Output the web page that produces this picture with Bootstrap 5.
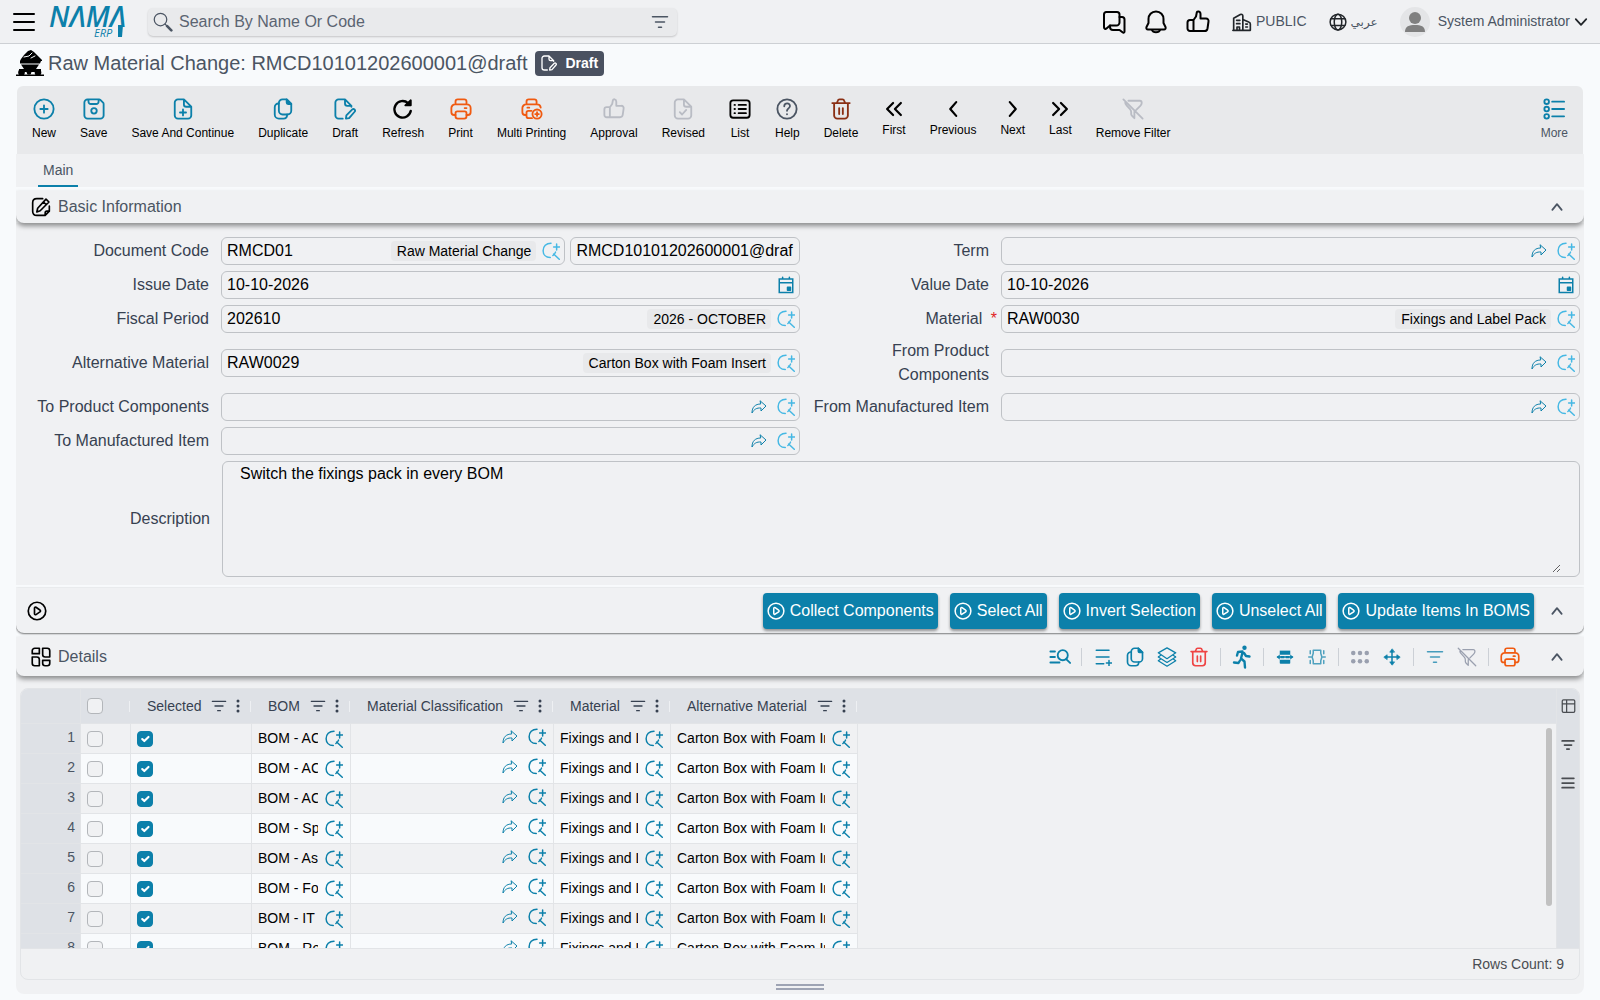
<!DOCTYPE html>
<html lang="en">
<head>
<meta charset="utf-8">
<meta name="viewport" content="width=device-width, initial-scale=1">
<title>Raw Material Change</title>
<link href="https://cdn.jsdelivr.net/npm/bootstrap@5.3.0/dist/css/bootstrap.min.css" rel="stylesheet">
<style>
:root{--brand:#0c80aa;--sky:#45b8e4;--panel:#f0f1f3;--page:#f8fafc;--line:#e2e4e7;--head:#dee1e6;--ink:#4b5563}
body{background:var(--page);font-family:"Liberation Sans",Arial,"DejaVu Sans",sans-serif;font-size:14px;color:#374151}
button{background:none;border:0;padding:0;color:inherit;display:inline-flex;align-items:center;justify-content:center}
a{color:inherit;text-decoration:none}
svg.ico{width:24px;height:24px;fill:none;stroke:currentColor;stroke-width:2;stroke-linecap:round;stroke-linejoin:round;flex:none;display:block}
svg.i14{width:14px;height:14px}
svg.i16{width:16px;height:16px}
svg.i18{width:18px;height:18px}
svg.i20{width:20px;height:20px}
svg.i22{width:22px;height:22px}
svg.thin{stroke-width:1.5}
svg.bold{stroke-width:3}
.brand{color:var(--brand)}.sky{color:var(--sky)}.muted{color:#b9bcc4}.orange{color:#f05a10}.ink{color:var(--ink)}

.topbar{height:44px;background:var(--panel);border-bottom:1px solid #cdd0d4;padding:0 12px}
.searchbox{width:529px;height:28px;background:#e9eaec;border-radius:5px;box-shadow:0 1px 2px rgba(0,0,0,.18);padding:0 8px 0 5px}
.searchbox input{background:none;border:0;outline:0;font-size:16px;color:var(--ink);flex:1}
.searchbox input::placeholder{color:#5b6472;opacity:1}
.topicons{gap:18px}
.arabic{font-size:12px}
.avatar{width:30px;height:30px;border-radius:50%;background:#e4e5e7}
.titlebar{height:42px;padding-bottom:4px}
.doctitle{font-size:20px;line-height:26px;color:var(--ink);font-weight:400;margin:0}
.draft-tag{height:25px;background:#4a5160;color:#fff;border-radius:4px;font-weight:700;padding:0 6px;gap:8px}

.tools{background:#e8e9eb;height:68px;border-radius:6px 6px 0 0;padding:12px 15px 0;margin:0 1px}
.tools button{flex-direction:column;font-size:12px;line-height:16px;color:#000;gap:5px;min-width:22px;justify-content:flex-start}
.tools .step{gap:2px}
.tools .step svg{stroke-width:2.400}
.tabs{background:var(--panel);height:33px;padding-left:22px}
.tabs a{font-size:14px;line-height:32px;padding:0 5px;height:33px;border-bottom:2px solid var(--brand);color:var(--ink)}
.secthead{background:var(--panel);border-radius:0 0 8px 8px;padding:0 20px 0 15px;font-size:16px;color:var(--ink);position:relative;clip-path:inset(-3px 0 -12px 0)}
.secthead .caption-text{margin-left:7px}
.deep{box-shadow:0 3px 5px rgba(0,0,0,.42)}
.slim{box-shadow:0 0 2px rgba(0,0,0,.12),0 1px 2px rgba(0,0,0,.5)}

.formgrid{background:var(--panel);padding:14px 4px 8px;display:grid;grid-template-columns:1fr 1fr;row-gap:6px}
.fieldrow{display:grid;grid-template-columns:201px 1fr;align-items:center;min-height:28px}
.fieldrow.wide{grid-column:1/-1;grid-template-columns:202px 1fr}
.fieldrow>label{font-size:16px;line-height:24px;text-align:right;padding-right:12px}
.fieldrow .req{padding-right:4px}
.req span{color:#e02424;margin-left:4px}
.box{height:28px;border:1px solid #bfc2c6;border-radius:6px;display:flex;align-items:center;padding:0 4px 0 5px;min-width:0}
.box input{border:0;background:none;outline:0;padding:0;font-size:16px;color:#000;min-width:0;flex:1}
.box button+button{margin-left:10px}
.hint{background:#e8e9eb;border-radius:4px;font-size:14px;line-height:20px;padding:0 5px 0 6px;margin-right:6px;color:#000}
.split{display:grid;grid-template-columns:3fr 2fr;gap:5px;min-width:0}
.notes{height:116px;border:1px solid #bfc2c6;border-radius:6px;padding:0 18px 3px 17px}
.notes textarea{border:0;background:none;outline:0;width:100%;height:100%;padding:0;font-size:16px;line-height:24px;color:#000;display:block}

.runbtn{background:var(--brand)!important;color:#fff!important;border-radius:4px;height:36px;font-size:16px;padding:0 4px!important;gap:5px;box-shadow:0 2px 3px rgba(0,0,0,.4)}
.gtools{gap:8px}
.gtools button{width:24px;height:24px}
.gtools i{width:1px;height:18px;background:#ccd0d6;margin:0 1px}

.gridwrap{background:var(--panel);padding:12px 4px 0;border-radius:0 0 8px 8px}
.gridbox{border:1px solid var(--line);border-radius:8px;overflow:hidden;height:292px}
.gridview{position:relative;overflow:hidden;flex:1;min-width:0}
.grid{table-layout:fixed;width:100%;border-collapse:separate;border-spacing:0}
.grid th{background:var(--head);height:35px;font-weight:400;padding:0 11px 0 16px;border-bottom:1px solid var(--line);color:#374151;position:relative}
.grid th.sep::after{content:"";position:absolute;right:1px;top:12px;width:1px;height:11px;background:#eef0f3}
.grid td{height:30px;padding:0 7px 0 6px;border-bottom:1px solid var(--line);border-right:1px solid var(--line);color:#000}
.grid tr:nth-child(even) td{background:var(--page)}
.grid tbody td.fill{border:0;background:var(--panel)}
.grid tbody th{height:30px;text-align:right;padding:0 5px 3px 0;color:var(--ink);border-right:1px solid var(--line)}
.grid .form-check-input{width:16px;height:16px;margin:0;display:block;border:1px solid #b3b6ba;border-radius:4px;background-color:var(--panel);box-shadow:none}
.grid .form-check-input:checked{background-color:var(--brand);border-color:var(--brand);background-size:14px}
.cut{overflow:hidden;white-space:nowrap;flex:1;margin-right:7px}
.thumb{position:absolute;right:4px;top:39px;width:6px;height:178px;border-radius:3px;background:#c1c1c1}
.side{width:23px;background:var(--head);border-left:1px solid var(--line);gap:22px;padding-top:8px;color:#4a4d52}
.gridfoot{height:31px;flex:none;border-top:1px solid var(--line);padding-right:15px;color:#4a4d52}
.grip{width:48px;height:6px;border:solid #9ea4b4;border-width:2px 0;margin:0 auto}
</style>
</head>
<body>
<svg class="d-none" xmlns="http://www.w3.org/2000/svg">
<symbol id="menu" viewBox="0 0 24 24"><path d="M2 4h20M2 12h20M2 20h20"/></symbol>
<symbol id="glass" viewBox="0 0 24 24"><circle cx="9" cy="9" r="7.500"/><path d="M14.500 14.500l2 2"/><path d="M17 17l5 5" stroke-width="3.200"/></symbol>
<symbol id="funnel" viewBox="0 0 24 24"><path d="M2 5h20M6 12h12M10 19h4"/></symbol>
<symbol id="chat" viewBox="0 0 24 24"><path d="M4 2h11a2.500 2.500 0 0 1 2.500 2.500v8a3 3 0 0 1-3 3H8L4.500 18.500c-1 .8-2.500.2-2.500-1.200V4.500A2.500 2.500 0 0 1 4 2z"/><path d="M17.500 7H20a2.500 2.500 0 0 1 2.500 2.500v12c0 1-1 1.500-2 .8L17.500 20H11a3 3 0 0 1-3-3v-1.500"/></symbol>
<symbol id="bell" viewBox="0 0 24 24"><path d="M12 1.500c-4.600 0-7.500 3.500-7.500 7.500v4l-2 4c-.6 1.300.2 2.500 1.500 2.500h16c1.300 0 2.100-1.200 1.500-2.500l-2-4V9c0-4-2.900-7.500-7.500-7.500z"/><path d="M8 20c1 3 7 3 8 0"/></symbol>
<symbol id="like" viewBox="0 0 24 24"><path d="M7.500 10H4a2.500 2.500 0 0 0-2.500 2.500v6A2.500 2.500 0 0 0 4 21h14.500a3 3 0 0 0 3-2.500l1-7A2.500 2.500 0 0 0 20 8.500h-5.500V4c0-3-3.500-3.500-3.800-1L10 6.500 7.500 10v11"/></symbol>
<symbol id="office" viewBox="0 0 24 24"><path d="M2 22V7.500L10 3a2 2 0 0 1 3 1.500V22M13 9l7 3a2.500 2.500 0 0 1 2 2.500V22H1M6 22v-4h3v4M5.500 10h4M5.500 14h4M16.500 14.500h2M16.500 18h2"/></symbol>
<symbol id="globe" viewBox="0 0 24 24"><circle cx="12" cy="12" r="10.500"/><ellipse cx="12" cy="12" rx="5" ry="10.500"/><path d="M3 7.500h18M3 16.500h18"/></symbol>
<symbol id="down" viewBox="0 0 24 24"><path d="M3 7l9 10 9-10"/></symbol>
<symbol id="up" viewBox="0 0 24 24"><path d="M4 17l8-10 8 10"/></symbol>
<symbol id="cart" viewBox="0 0 28 26"><g fill="#000" stroke="none"><path d="M5 9l3-4 4-4 3-1 3 2 3 3 3 3 2 2v1H4z"/><path d="M4 11h21l-1 2.500H4zM5 14.500h18l-3 4.500H8z"/><path d="M3 19h22v3H3zM0 24.500h28V26H0z"/><circle cx="5.500" cy="22.500" r="3.300"/><circle cx="13" cy="22.500" r="2.300"/><circle cx="22" cy="22.500" r="3.300"/></g><path d="M8 7l5-1 3-3M15 8l4-2" stroke="#f8fafc" stroke-width="1"/></symbol>
<symbol id="plusring" viewBox="0 0 24 24"><circle cx="12" cy="12" r="10.500"/><path d="M12 8v8M8 12h8"/></symbol>
<symbol id="save" viewBox="0 0 24 24"><path d="M5 1.500h12.500a2 2 0 0 1 1.400.6l3 3a2 2 0 0 1 .6 1.400V19a3.500 3.500 0 0 1-3.500 3.500H5A3.500 3.500 0 0 1 1.500 19V5A3.500 3.500 0 0 1 5 1.500zM6 1.500V4a2.500 2.500 0 0 0 2.500 2.500h6A2.500 2.500 0 0 0 17 4V1.500"/><circle cx="12" cy="14" r="3"/></symbol>
<symbol id="docplus" viewBox="0 0 24 24"><path d="M13 1.500H6.500A3.500 3.500 0 0 0 3 5v14a3.500 3.500 0 0 0 3.500 3.500h11A3.500 3.500 0 0 0 21 19V9.500zM13 1.500V7a2.500 2.500 0 0 0 2.500 2.500H21M12 12.500v6.500M8.700 15.800h6.600"/></symbol>
<symbol id="copy" viewBox="0 0 24 24"><path d="M16 1.500h-4.500a4 4 0 0 0-4 4v8.500a4 4 0 0 0 4 4h5.500a4 4 0 0 0 4-4V6.500z"/><path d="M16 1.500V5a1.500 1.500 0 0 0 1.500 1.500h3.500z" fill="currentColor"/><path d="M7.500 6A4 4 0 0 0 3 10v8a4.500 4.500 0 0 0 4.500 4.500h5c2.300 0 4-1.500 4-4.500"/></symbol>
<symbol id="docpen" viewBox="0 0 24 24"><path d="M9.500 22.500H5A3.500 3.500 0 0 1 1.500 19V5A3.500 3.500 0 0 1 5 1.500h7l7 7v1M12 1.500V6a2.500 2.500 0 0 0 2.500 2.500H19"/><path d="M13 22.500l.5-3.500 6.500-6.500c1.500-1.500 4 .8 2.500 2.500L16.500 22z"/></symbol>
<symbol id="refresh" viewBox="0 0 24 24"><path d="M20.500 14a9 9 0 1 1-3-8.500" stroke-width="2.600"/><path d="M20.500 2.500v5.500h-6z" fill="currentColor"/></symbol>
<symbol id="printer" viewBox="0 0 24 24"><path d="M6 7V4a2.500 2.500 0 0 1 2.500-2.500h7A2.500 2.500 0 0 1 18 4v3M6 18.500H4.500A3 3 0 0 1 1.500 15.500V11a4 4 0 0 1 4-4h13a4 4 0 0 1 4 4v4.500a3 3 0 0 1-3 3H18M16 11h2"/><path d="M8 14.500h8a2 2 0 0 1 2 2V20a2.500 2.500 0 0 1-2.500 2.500h-7A2.500 2.500 0 0 1 6 20v-3.500a2 2 0 0 1 2-2z"/></symbol>
<symbol id="multi" viewBox="0 0 24 24"><path d="M6 7V4a2.500 2.500 0 0 1 2.500-2.500h6A2.500 2.500 0 0 1 17 4v3M6 18.500H4.500A3 3 0 0 1 1.500 15.500V11a4 4 0 0 1 4-4h12a4 4 0 0 1 4 3.500M12 22H8.500A2.500 2.500 0 0 1 6 19.500V16a2 2 0 0 1 2-2h3.500M7 10.500h2"/><circle cx="17.500" cy="17.500" r="5"/><path d="M17.500 15.500v4M15.500 17.500h4"/></symbol>
<symbol id="doccheck" viewBox="0 0 24 24"><path d="M13 1.500H6.500A3.500 3.500 0 0 0 3 5v14a3.500 3.500 0 0 0 3.500 3.500h11A3.500 3.500 0 0 0 21 19V9.500zM13 1.500V7a2.500 2.500 0 0 0 2.500 2.500H21M8.500 15.500l2.500 2.500 4.500-5"/></symbol>
<symbol id="list" viewBox="0 0 24 24"><rect x="1.500" y="2.500" width="21" height="19" rx="3"/><path d="M6 7.500h.5M6 12h.5M6 16.500h.5M10.500 7.500h8M10.500 12h8M10.500 16.500h8"/></symbol>
<symbol id="help" viewBox="0 0 24 24"><circle cx="12" cy="12" r="10.500"/><path d="M9 9c0-4.500 6.500-4 6.200 0-.2 2.200-3.200 2.500-3.200 5M12 17.500v.3"/></symbol>
<symbol id="trash" viewBox="0 0 24 24"><path d="M2.500 5.500h19M7.500 5.500l1-2.500a2 2 0 0 1 2-1.500h3a2 2 0 0 1 2 1.500l1 2.500M4.500 5.500V19A3.500 3.500 0 0 0 8 22.500h8a3.500 3.500 0 0 0 3.500-3.500V5.500M10 11v6.500M14 11v6.500"/></symbol>
<symbol id="first" viewBox="0 0 24 24"><path d="M11 5.500L4.500 12l6.500 6.500M19.500 5.500L13 12l6.500 6.500"/></symbol>
<symbol id="prev" viewBox="0 0 24 24"><path d="M15.500 4.500L9 12l6.500 7.500"/></symbol>
<symbol id="next" viewBox="0 0 24 24"><path d="M8.500 4.500L15 12l-6.500 7.500"/></symbol>
<symbol id="last" viewBox="0 0 24 24"><path d="M4.500 5.500L11 12l-6.500 6.500M13 5.500l6.500 6.500-6.500 6.500"/></symbol>
<symbol id="nofilter" viewBox="0 0 24 24"><path d="M1.500 1.500l21 21M7 3h12.500c1.500 0 2 1 2 2.500s-.5 2-1.500 3L15.500 13M3.500 5c0 1.500.5 2 1.500 3l4 4.500c.8 1 1 1.500 1 3v2c0 1 .5 1.500 1 2l2.500 2.500V15"/></symbol>
<symbol id="more" viewBox="0 0 24 24"><circle cx="4" cy="4" r="2.500"/><circle cx="4" cy="12" r="2.500"/><circle cx="4" cy="20" r="2.500"/><path d="M10 4h13M10 12h13M10 20h13"/></symbol>
<symbol id="edit" viewBox="0 0 24 24"><path d="M14 2H7C3.500 2 2 3.500 2 7v10c0 3.500 1.500 5 5 5h10l5-5v-6M17 22v-3c0-1.500.5-2 2-2h3M18 2.500l3.500 3.500L11 16.500 7 18l1-4.500zM15 6l3 3"/></symbol>
<symbol id="lookup" viewBox="0 0 24 24"><path d="M12 1.500C5.500 1.500 1.500 6 1.500 11.500c0 5 3.500 9 9.500 9M19.500 2.500v8M15.500 6.500h8M18 13.500c-.5 1.500-2 3.500-3.500 4.500M15.500 16l7.500 7"/></symbol>
<symbol id="share" viewBox="0 0 24 24"><path d="M14 3l8.500 7.500L15 18v-4.500C8.500 13 4.500 15.500 1.500 21 1.500 12 6.500 7.500 14 7.500z"/></symbol>
<symbol id="cal" viewBox="0 0 24 24"><path d="M3 4h18v18H3zM3 9h18M7.500 1.500V4M16.500 1.500V4" stroke-linejoin="miter"/><path d="M14 15h4v4h-4z" fill="currentColor"/></symbol>
<symbol id="play" viewBox="0 0 24 24"><circle cx="12" cy="12" r="10.500"/><path d="M9 8.500c0-1 1-1.500 1.800-1l4.700 3.300c.9.600.9 1.700 0 2.300l-4.700 3.200C10 16.800 9 16.300 9 15.300z"/></symbol>
<symbol id="tiles" viewBox="0 0 24 24"><path d="M4.500 1.500H10V8H1.500V4.500a3 3 0 0 1 3-3zM14 1.500h5.500a3 3 0 0 1 3 3V12H17a3 3 0 0 1-3-3zM1.500 12H7a3 3 0 0 1 3 3v7.500H4.500a3 3 0 0 1-3-3zM14 16h8.500v3.500a3 3 0 0 1-3 3H17a3 3 0 0 1-3-3z"/></symbol>
<symbol id="listfind" viewBox="0 0 24 24"><circle cx="15" cy="10" r="5.500"/><path d="M19 14.500l4 4M1.500 6h5M1.500 12h5M1.500 18h10"/></symbol>
<symbol id="addrow" viewBox="0 0 24 24"><path d="M3 3h17M3 12h17M3 21h10M16.500 20h7M20 16.500v7"/></symbol>
<symbol id="layers" viewBox="0 0 24 24"><path d="M12 1l10.500 6L12 14 1.500 7zM1.500 12L12 18.500 22.500 12M1.500 16.500L12 23l10.500-6.500M1.500 12l3-2M22.500 12l-3-2M1.500 16.500l3-2M22.500 16.500l-3-2"/></symbol>
<symbol id="runner" viewBox="0 0 24 24"><circle cx="14.500" cy="2.700" r="2.200" fill="currentColor" stroke="none"/><path d="M7 10.500l1-3.500 4.500-.5M12.500 7.500l-1.500 6 3.500 3 .5 6M10 15.500L8.500 18 4 17.500M14 8l2 3 3.500.5" stroke-width="2.400"/></symbol>
<symbol id="fitrow" viewBox="0 0 24 24"><g fill="currentColor" stroke="none"><rect x="5" y="3.500" width="14" height="5.500"/><rect x="5" y="15.500" width="14" height="5.500" rx="1"/><path d="M6 10.500h5v3H6zM13 10.500h5v3h-5zM1 12l4-3.500v7zM23 12l-4-3.500v7z"/></g><path d="M2 12h20"/></symbol>
<symbol id="fitcol" viewBox="0 0 24 24"><path d="M7 3h10v4l1.500 5L17 17v4H7v-4l-1.500-5L7 7zM3 3.500v4M1 12h3M3 16.500v4M21 3.500v4M20 12h3M21 16.500v4"/></symbol>
<symbol id="dots" viewBox="0 0 24 24"><g fill="currentColor" stroke="none"><circle cx="3" cy="6.500" r="3"/><circle cx="12" cy="6.500" r="3"/><circle cx="21" cy="6.500" r="3"/><circle cx="3" cy="17.500" r="3"/><circle cx="12" cy="17.500" r="3"/><circle cx="21" cy="17.500" r="3"/></g></symbol>
<symbol id="move" viewBox="0 0 24 24"><path d="M12 3v18M3 12h18"/><path d="M12 1.500L9 5.500h6zM12 22.500l-3-4h6zM1.500 12l4-3v6zM22.500 12l-4-3v6z" fill="currentColor" stroke-width="1"/></symbol>
<symbol id="kebab" viewBox="0 0 6 16"><g fill="currentColor" stroke="none"><circle cx="3" cy="3" r="1.500"/><circle cx="3" cy="8" r="1.500"/><circle cx="3" cy="13" r="1.500"/></g></symbol>
<symbol id="columns" viewBox="0 0 24 24"><path d="M4 2h16a2 2 0 0 1 2 2v16a2 2 0 0 1-2 2H4a2 2 0 0 1-2-2V4a2 2 0 0 1 2-2zM9 2v20M2 8.500h20" stroke-linecap="butt"/></symbol>
</svg>

<header class="topbar d-flex align-items-center">
  <button aria-label="Menu" class="text-black"><svg class="ico"><use href="#menu"/></svg></button>
  <a href="#" class="ms-2 me-2" aria-label="NAMA ERP">
    <svg width="96" height="34" viewBox="0 0 96 34" class="d-block"><g fill="#0c80aa" font-family="'Open Sans'" font-style="italic"><text x="5" y="22" font-size="28" font-weight="600">NΛMΛ</text><text x="50" y="32" font-size="11">ERP</text></g><path d="M74 20h5l-1 12h-4z" fill="#0c80aa"/></svg>
  </a>
  <div class="searchbox d-flex align-items-center">
    <svg class="ico i20 thin ink"><use href="#glass"/></svg>
    <input class="ms-1" type="text" aria-label="Search" placeholder="Search By Name Or Code">
    <button aria-label="Filter search" class="ink"><svg class="ico i18"><use href="#funnel"/></svg></button>
  </div>
  <div class="ms-auto d-flex align-items-center topicons">
    <button aria-label="Messages" class="text-black"><svg class="ico"><use href="#chat"/></svg></button>
    <button aria-label="Notifications" class="text-black"><svg class="ico"><use href="#bell"/></svg></button>
    <button aria-label="Approvals" class="text-black"><svg class="ico"><use href="#like"/></svg></button>
    <button class="ink ms-1"><svg class="ico i20 me-1 text-dark"><use href="#office"/></svg><span>PUBLIC</span></button>
    <button class="ink ms-1 me-1"><svg class="ico i18 me-1 text-dark"><use href="#globe"/></svg><span lang="ar" class="arabic">عربي</span></button>
    <button class="ink"><span class="avatar me-2"><svg width="30" height="30" viewBox="0 0 30 30" class="d-block"><g fill="#808080"><circle cx="15" cy="11" r="6"/><path d="M5 25c0-6 4-7 10-7s10 1 10 7z"/></g></svg></span><span>System Administrator</span><svg class="ico i14 bold ms-1 text-dark"><use href="#down"/></svg></button>
  </div>
</header>

<main class="px-3">
  <div class="titlebar d-flex align-items-center">
    <svg class="ico" style="width:28px;height:26px"><use href="#cart"/></svg>
    <h1 class="doctitle ms-1">Raw Material Change: RMCD10101202600001@draft</h1>
    <span class="draft-tag d-inline-flex align-items-center ms-2"><svg class="ico i16"><use href="#docpen"/></svg>Draft</span>
  </div>

  <nav class="tools d-flex align-items-start" aria-label="Document tools">
    <div class="d-flex gap-4 align-items-start">
      <button><svg class="ico i22 brand"><use href="#plusring"/></svg>New</button>
      <button><svg class="ico i22 brand"><use href="#save"/></svg>Save</button>
      <button><svg class="ico i22 brand"><use href="#docplus"/></svg>Save And Continue</button>
      <button><svg class="ico i22 brand"><use href="#copy"/></svg>Duplicate</button>
      <button><svg class="ico i22 brand"><use href="#docpen"/></svg>Draft</button>
      <button><svg class="ico i22"><use href="#refresh"/></svg>Refresh</button>
      <button><svg class="ico i22 orange"><use href="#printer"/></svg>Print</button>
      <button><svg class="ico i22 orange"><use href="#multi"/></svg>Multi Printing</button>
      <button><svg class="ico i22 muted"><use href="#like"/></svg>Approval</button>
      <button><svg class="ico i22 muted"><use href="#doccheck"/></svg>Revised</button>
      <button><svg class="ico i22"><use href="#list"/></svg>List</button>
      <button><svg class="ico i22 ink"><use href="#help"/></svg>Help</button>
      <button><svg class="ico i22" style="color:#8a2f14"><use href="#trash"/></svg>Delete</button>
      <button class="step"><svg class="ico i22"><use href="#first"/></svg>First</button>
      <button class="step"><svg class="ico i22"><use href="#prev"/></svg>Previous</button>
      <button class="step"><svg class="ico i22"><use href="#next"/></svg>Next</button>
      <button class="step"><svg class="ico i22"><use href="#last"/></svg>Last</button>
      <button><svg class="ico i22 muted"><use href="#nofilter"/></svg>Remove Filter</button>
    </div>
    <button class="ms-auto"><svg class="ico i22 brand"><use href="#more"/></svg><span class="ink">More</span></button>
  </nav>
  <div class="tabs d-flex mb-1"><a href="#basic">Main</a></div>

  <section id="basic">
    <div class="secthead deep d-flex align-items-center" style="height:32px">
      <svg class="ico i20 text-black"><use href="#edit"/></svg><span class="caption-text">Basic Information</span>
      <button class="ms-auto ink" aria-label="Collapse basic information"><svg class="ico i14 bold"><use href="#up"/></svg></button>
    </div>
    <form class="formgrid" onsubmit="return false">
      <div class="fieldrow"><label for="f1">Document Code</label>
        <div class="split">
          <div class="box"><input id="f1" value="RMCD01"><span class="hint">Raw Material Change</span><button aria-label="Look up" class="sky"><svg class="ico i18"><use href="#lookup"/></svg></button></div>
          <div class="box"><input aria-label="Document number" value="RMCD10101202600001@draf"></div>
        </div></div>
      <div class="fieldrow"><label for="f2">Term</label>
        <div class="box"><input id="f2"><button aria-label="Open" class="brand"><svg class="ico i16 thin"><use href="#share"/></svg></button><button aria-label="Look up" class="sky"><svg class="ico i18"><use href="#lookup"/></svg></button></div></div>
      <div class="fieldrow"><label for="f3">Issue Date</label>
        <div class="box"><input id="f3" value="10-10-2026"><button aria-label="Pick date" class="brand"><svg class="ico i18"><use href="#cal"/></svg></button></div></div>
      <div class="fieldrow"><label for="f4">Value Date</label>
        <div class="box"><input id="f4" value="10-10-2026"><button aria-label="Pick date" class="brand"><svg class="ico i18"><use href="#cal"/></svg></button></div></div>
      <div class="fieldrow"><label for="f5">Fiscal Period</label>
        <div class="box"><input id="f5" value="202610"><span class="hint">2026 - OCTOBER</span><button aria-label="Look up" class="sky"><svg class="ico i18"><use href="#lookup"/></svg></button></div></div>
      <div class="fieldrow"><label for="f6" class="req">Material <span>*</span></label>
        <div class="box"><input id="f6" value="RAW0030"><span class="hint">Fixings and Label Pack</span><button aria-label="Look up" class="sky"><svg class="ico i18"><use href="#lookup"/></svg></button></div></div>
      <div class="fieldrow"><label for="f7">Alternative Material</label>
        <div class="box"><input id="f7" value="RAW0029"><span class="hint">Carton Box with Foam Insert</span><button aria-label="Look up" class="sky"><svg class="ico i18"><use href="#lookup"/></svg></button></div></div>
      <div class="fieldrow"><label for="f8">From Product Components</label>
        <div class="box"><input id="f8"><button aria-label="Open" class="brand"><svg class="ico i16 thin"><use href="#share"/></svg></button><button aria-label="Look up" class="sky"><svg class="ico i18"><use href="#lookup"/></svg></button></div></div>
      <div class="fieldrow"><label for="f9">To Product Components</label>
        <div class="box"><input id="f9"><button aria-label="Open" class="brand"><svg class="ico i16 thin"><use href="#share"/></svg></button><button aria-label="Look up" class="sky"><svg class="ico i18"><use href="#lookup"/></svg></button></div></div>
      <div class="fieldrow"><label for="f10">From Manufactured Item</label>
        <div class="box"><input id="f10"><button aria-label="Open" class="brand"><svg class="ico i16 thin"><use href="#share"/></svg></button><button aria-label="Look up" class="sky"><svg class="ico i18"><use href="#lookup"/></svg></button></div></div>
      <div class="fieldrow"><label for="f11">To Manufactured Item</label>
        <div class="box"><input id="f11"><button aria-label="Open" class="brand"><svg class="ico i16 thin"><use href="#share"/></svg></button><button aria-label="Look up" class="sky"><svg class="ico i18"><use href="#lookup"/></svg></button></div></div>
      <div class="fieldrow wide"><label for="f12">Description</label>
        <div class="notes"><textarea id="f12">Switch the fixings pack in every BOM</textarea></div></div>
    </form>
  </section>

  <section class="secthead slim d-flex align-items-center" style="height:45px;margin-top:3px">
    <svg class="ico i20 text-black" style="margin-left:-4px"><use href="#play"/></svg>
    <div class="ms-auto d-flex" style="gap:12px">
      <button class="runbtn"><svg class="ico i18"><use href="#play"/></svg>Collect Components</button>
      <button class="runbtn"><svg class="ico i18"><use href="#play"/></svg>Select All</button>
      <button class="runbtn"><svg class="ico i18"><use href="#play"/></svg>Invert Selection</button>
      <button class="runbtn"><svg class="ico i18"><use href="#play"/></svg>Unselect All</button>
      <button class="runbtn"><svg class="ico i18"><use href="#play"/></svg>Update Items In BOMS</button>
    </div>
    <button class="ink ms-3" aria-label="Collapse actions"><svg class="ico i14 bold"><use href="#up"/></svg></button>
  </section>

  <section>
    <div class="secthead deep d-flex align-items-center" style="height:39px;margin-top:4px">
      <svg class="ico i20 text-black"><use href="#tiles"/></svg><span class="caption-text">Details</span>
      <div class="gtools ms-auto d-flex align-items-center brand">
        <button aria-label="Find"><svg class="ico i22"><use href="#listfind"/></svg></button><i></i>
        <button aria-label="Add row"><svg class="ico i18"><use href="#addrow"/></svg></button>
        <button aria-label="Copy row"><svg class="ico i20"><use href="#copy"/></svg></button>
        <button aria-label="Layers"><svg class="ico i20 thin"><use href="#layers"/></svg></button>
        <button aria-label="Delete row" style="color:#ef4444"><svg class="ico i20"><use href="#trash"/></svg></button><i></i>
        <button aria-label="Run"><svg class="ico"><use href="#runner"/></svg></button><i></i>
        <button aria-label="Fit rows"><svg class="ico i18"><use href="#fitrow"/></svg></button>
        <button aria-label="Fit columns" style="opacity:.7"><svg class="ico i18"><use href="#fitcol"/></svg></button><i></i>
        <button aria-label="Arrange" style="color:#9aa0af"><svg class="ico i18"><use href="#dots"/></svg></button>
        <button aria-label="Move"><svg class="ico i18"><use href="#move"/></svg></button><i></i>
        <button aria-label="Filter" style="opacity:.75"><svg class="ico i18"><use href="#funnel"/></svg></button>
        <button aria-label="Remove filter" style="color:#9aa0af"><svg class="ico i20 thin"><use href="#nofilter"/></svg></button><i></i>
        <button aria-label="Print" class="orange"><svg class="ico i20"><use href="#printer"/></svg></button>
      </div>
      <button class="ink" style="margin-left:28px" aria-label="Collapse details"><svg class="ico i14 bold"><use href="#up"/></svg></button>
    </div>
    <div class="gridwrap">
      <div class="gridbox d-flex flex-column">
        <div class="d-flex flex-fill overflow-hidden">
          <div class="gridview">
            <table class="grid">
              <colgroup><col style="width:60px"><col style="width:50px"><col style="width:121px"><col style="width:99px"><col style="width:203px"><col style="width:117px"><col style="width:187px"><col></colgroup>
              <thead><tr id="heads"></tr></thead>
              <tbody id="rows"></tbody>
            </table>
            <div class="thumb"></div>
          </div>
          <div class="side d-flex flex-column align-items-center">
            <button aria-label="Columns"><svg class="ico i18" style="width:15px"><use href="#columns"/></svg></button>
            <button aria-label="Filters"><svg class="ico i16 bold" style="width:14px"><use href="#funnel"/></svg></button>
            <button aria-label="Views"><svg class="ico bold" style="width:14px;height:16px"><use href="#menu"/></svg></button>
          </div>
        </div>
        <div class="gridfoot d-flex align-items-center justify-content-end">Rows Count: 9</div>
      </div>
      <div class="pt-1 pb-1"><div class="grip"></div></div>
    </div>
  </section>
</main>

<script>
const icon = (id, cls) => `<svg class="ico ${cls}"><use href="#${id}"/></svg>`;
const look = `<button class="brand" aria-label="Look up">${icon('lookup', 'i18')}</button>`;
const heads = ['Selected', 'BOM', 'Material Classification', 'Material', 'Alternative Material'];
document.getElementById('heads').innerHTML =
  '<th style="border-right:1px solid #e2e4e7"></th><th class="sep" style="padding-left:6px"><input class="form-check-input" type="checkbox" aria-label="Select every row"></th>' +
  heads.map(h => `<th class="sep"><div class="d-flex align-items-center"><span class="text-nowrap">${h}</span>` +
    `<button class="ms-auto" aria-label="Filter ${h}">${icon('funnel', 'i16')}</button><button class="ms-2" aria-label="Menu ${h}"><svg class="ico" style="width:6px;height:16px"><use href="#kebab"/></svg></button></div></th>`).join('') + '<th></th>';
const boms = ['AC', 'AC', 'AC', 'Sp', 'As', 'Fo', 'IT', 'Re', 'Wa'];
const cut = t => `<div class="d-flex align-items-center"><span class="cut">${t}</span>${look}</div>`;
document.getElementById('rows').innerHTML = boms.map((b, i) =>
  `<tr><th scope="row">${i + 1}</th>` +
  `<td><input class="form-check-input" type="checkbox" aria-label="Row ${i + 1}"></td>` +
  `<td><input class="form-check-input" type="checkbox" checked aria-label="Selected ${i + 1}"></td>` +
  `<td>${cut('BOM - ' + b)}</td>` +
  `<td><div class="d-flex justify-content-end pb-1"><button class="brand" style="margin-right:10px" aria-label="Open">${icon('share', 'i16 thin')}</button>${look}</div></td>` +
  `<td>${cut('Fixings and&nbsp;L')}</td><td>${cut('Carton Box with Foam In')}</td><td class="fill"></td></tr>`).join('');
</script>
<script src="https://cdn.jsdelivr.net/npm/bootstrap@5.3.0/dist/js/bootstrap.bundle.min.js"></script>
</body>
</html>
